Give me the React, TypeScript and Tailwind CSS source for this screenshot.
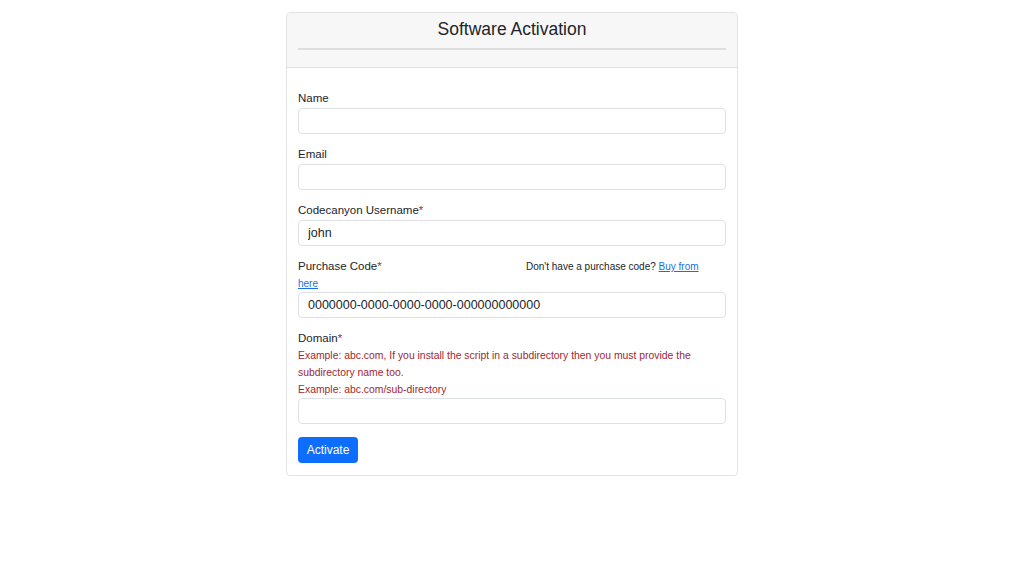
import { useState } from "react";

const font = { fontFamily: '"Liberation Sans", Arial, sans-serif' };

const inputCls =
  "block w-full h-[26px] px-[9px] text-[12.5px] text-[#212529] bg-white border border-[#dee2e6] rounded-[4px] outline-none";

const Field = ({ label, required, value, onChange }: { label: string; required?: boolean; value: string; onChange: (v: string) => void }) => (
  <div className="mb-3">
    <label className="block text-[11.5px] leading-[17px] text-[#212529] mb-[1px]">
      {label}
      {required && <span className="text-[#b02a37]">*</span>}
    </label>
    <input className={inputCls} value={value} onChange={(e) => onChange(e.target.value)} />
  </div>
);

const App = () => {
  const [form, setForm] = useState({
    name: "",
    email: "",
    username: "john",
    code: "0000000-0000-0000-0000-000000000000",
    domain: "",
  });

  return (
    <div className="min-h-[561px] bg-white pt-[12px]" style={font}>
      <div className="w-[452px] mx-auto border border-[#e3e3e3] rounded-[4px] overflow-hidden">
        {/* Header */}
        <div className="bg-[#f7f7f7] border-b border-[#e3e3e3] px-[11px] pt-[5px] pb-[17px]">
          <h1 className="text-center text-[17.5px] leading-[22px] text-[#212529]">
            Software Activation
          </h1>
          <div className="mt-[8px] border-t-2 border-[#dedede]" />
        </div>

        {/* Body */}
        <div className="px-[11px] pt-[22px] pb-[12px]">
          <Field label="Name" value={form.name} onChange={(v) => setForm({ ...form, name: v })} />
          <Field label="Email" value={form.email} onChange={(v) => setForm({ ...form, email: v })} />
          <Field
            label="Codecanyon Username"
            required
            value={form.username}
            onChange={(v) => setForm({ ...form, username: v })}
          />

          <div className="mb-3">
            <div className="flex h-[17px] items-center text-[#212529]">
              <label className="w-[228px] text-[11.5px]">
                Purchase Code<span className="text-[#b02a37]">*</span>
              </label>
              <span className="text-[10px]">
                Don't have a purchase code?{" "}
                <a href="#" className="text-[#1a6fe8] underline">Buy from</a>
              </span>
            </div>
            <div className="flex h-[17px] items-center">
              <a href="#" className="text-[10px] text-[#1a6fe8] underline">here</a>
            </div>
            <input
              className={inputCls}
              value={form.code}
              onChange={(e) => setForm({ ...form, code: e.target.value })}
            />
          </div>

          <div className="mb-[13px]">
            <label className="block text-[11.5px] leading-[17px] text-[#212529]">
              Domain<span className="text-[#b02a37]">*</span>
            </label>
            <p className="text-[10.4px] leading-[17px] text-[#a32630]">
              Example: abc.com, If you install the script in a subdirectory then you must provide the
              subdirectory name too.
            </p>
            <p className="text-[10.4px] leading-[17px] text-[#a32630]">Example: abc.com/sub-directory</p>
            <input
              className={inputCls}
              value={form.domain}
              onChange={(e) => setForm({ ...form, domain: e.target.value })}
            />
          </div>

          <button className="h-[26px] w-[60px] bg-[#0d6efd] text-white text-[12px] rounded-[4px]">
            Activate
          </button>
        </div>
      </div>
    </div>
  );
};

export default App;
